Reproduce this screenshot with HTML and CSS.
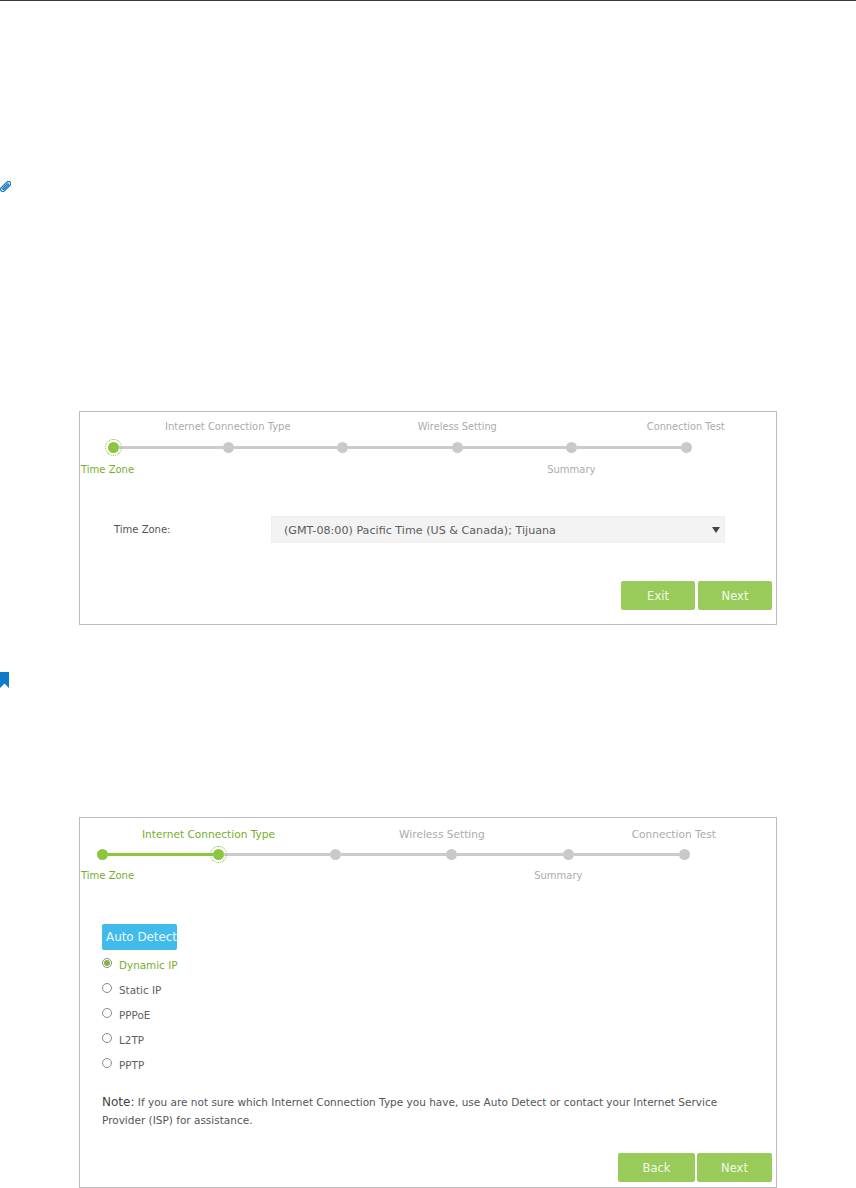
FILE: index.html
```html
<!DOCTYPE html>
<html lang="en">
<head>
<meta charset="utf-8">
<title>Quick Setup</title>
<link rel="stylesheet" href="styles.css">
</head>
<body>
<div class="page">
  <div class="tip-row clip-row">
    <svg class="clip" width="11" height="11" viewBox="0 0 11 11"><g transform="rotate(45 5.5 5.5)" fill="none" stroke="#1478c4" stroke-width="1.3"><rect x="3.4" y="-0.8" width="4.4" height="12.4" rx="2.2"/><rect x="4.9" y="1.6" width="1.5" height="7.6" rx="0.75"/></g></svg>
  </div>

  <section class="shot shot-a">
    <div class="labels la-top">
      <span class="lab l-a1">Internet Connection Type</span>
      <span class="lab l-a2">Wireless Setting</span>
      <span class="lab l-a3">Connection Test</span>
    </div>
    <div class="track ta">
      <span class="dot current"></span><span class="line"></span>
      <span class="dot"></span><span class="line"></span>
      <span class="dot"></span><span class="line"></span>
      <span class="dot"></span><span class="line"></span>
      <span class="dot"></span><span class="line"></span>
      <span class="dot"></span>
    </div>
    <div class="labels la-bot">
      <span class="lab on">Time Zone</span>
      <span class="lab l-a4">Summary</span>
    </div>
    <div class="field">
      <span class="field-name">Time Zone:</span>
      <div class="select">
        <span>(GMT-08:00) Pacific Time (US &amp; Canada); Tijuana</span>
        <span class="caret"></span>
      </div>
    </div>
    <div class="actions actions-a">
      <button class="btn">Exit</button>
      <button class="btn">Next</button>
    </div>
  </section>

  <div class="tip-row mark-row">
    <svg width="10" height="16" viewBox="0 0 10 16"><path d="M0 0H9V16L4.5 11.5 0 16Z" fill="#0b7cc9"/></svg>
  </div>

  <section class="shot shot-b">
    <div class="labels lb-top">
      <span class="lab on l-b1">Internet Connection Type</span>
      <span class="lab l-b2">Wireless Setting</span>
      <span class="lab l-b3">Connection Test</span>
    </div>
    <div class="track tb">
      <span class="dot done"></span><span class="line done"></span>
      <span class="dot current"></span><span class="line"></span>
      <span class="dot"></span><span class="line"></span>
      <span class="dot"></span><span class="line"></span>
      <span class="dot"></span><span class="line"></span>
      <span class="dot"></span>
    </div>
    <div class="labels lb-bot">
      <span class="lab on">Time Zone</span>
      <span class="lab l-b4">Summary</span>
    </div>
    <div class="detect-box"><button class="detect">Auto Detect</button></div>
    <ul class="radios">
      <li class="radio on"><span class="ring checked"></span>Dynamic IP</li>
      <li class="radio"><span class="ring"></span>Static IP</li>
      <li class="radio"><span class="ring"></span>PPPoE</li>
      <li class="radio"><span class="ring"></span>L2TP</li>
      <li class="radio"><span class="ring"></span>PPTP</li>
    </ul>
    <p class="note"><span class="note-head">Note:</span> If you are not sure which Internet Connection Type you have, use Auto Detect or contact your Internet Service<br>Provider (ISP) for assistance.</p>
    <div class="actions actions-b">
      <button class="btn wide">Back</button>
      <button class="btn wider">Next</button>
    </div>
  </section>
</div>
</body>
</html>
```
FILE: styles.css
```css
* { box-sizing: border-box; }
html, body { margin: 0; padding: 0; background: #fff; }
body {
  height: 1188px;
  overflow: hidden;
  font-family: "DejaVu Sans", Verdana, sans-serif;
  font-size: 10px;
  color: #555;
}
.page { border-top: 1px solid #3a3a3a; }

.tip-row { display: flex; line-height: 0; }
.clip-row { padding-top: 180px; height: 410px; }
.mark-row { padding-top: 47px; height: 192px; }

.shot {
  width: 698px;
  margin-left: 79px;
  border: 1px solid #bcbcbc;
  background: #fff;
}
.shot-a { height: 214px; }
.shot-b { height: 371px; }

.labels { display: flex; height: 14px; line-height: 14px; white-space: nowrap; }
.lab { color: #ababab; }
.lab.on { color: #78ad2c; }

.la-top { margin-top: 8px; }
.l-a1 { margin-left: 85px; }
.l-a2 { margin-left: 127px; font-size: 9.8px; }
.l-a3 { margin-left: 150px; font-size: 9.8px; }
.la-bot { margin-top: 9px; margin-left: 1px; }
.l-a4 { margin-left: 413px; }

.lb-top { margin-top: 9px; font-size: 10.6px; }
.l-b1 { margin-left: 62px; }
.l-b2 { margin-left: 124px; }
.l-b3 { margin-left: 147px; }
.lb-bot { margin-top: 8px; margin-left: 1px; }
.l-b4 { margin-left: 400px; }

.track { display: flex; align-items: center; height: 14px; }
.ta { margin-top: 6px; padding-left: 28px; width: 612px; }
.tb { margin-top: 6px; padding-left: 17px; width: 610px; }
.dot {
  flex: none;
  width: 11px;
  height: 11px;
  border-radius: 50%;
  background: #c9c9c9;
}
.dot.done { background: #8cc63f; }
.dot.current {
  width: 17px;
  height: 17px;
  margin: -3px;
  position: relative;
  background: #8cc63f;
  border: 1px dotted #7fb83a;
  background-clip: content-box;
  padding: 2px;
}
.line { flex: 1; height: 3px; background: #cbcbcb; }
.line.done { background: #8cc63f; }

.field { display: flex; align-items: center; margin-top: 39px; padding-left: 34px; }
.field-name { width: 157px; }
.select {
  display: flex;
  align-items: center;
  justify-content: space-between;
  width: 454px;
  height: 27px;
  padding: 1px 4px 0 12px;
  background: #f3f3f3;
  border: 1px solid #efefef;
  color: #5c5c5c;
  font-size: 11.15px;
}
.caret {
  width: 0;
  height: 0;
  border-left: 4px solid transparent;
  border-right: 4px solid transparent;
  border-top: 6px solid #444;
}

.actions { display: flex; justify-content: flex-end; padding-right: 4px; }
.actions-a { gap: 3px; margin-top: 38px; }
.actions-b { gap: 2px; margin-top: 24px; }
.btn {
  width: 74px;
  height: 29px;
  padding: 0;
  border: 0;
  border-radius: 2px;
  background: #98cb59;
  color: #f4f9ec;
  font-family: inherit;
  font-size: 11.5px;
}
.btn.wide { width: 77px; }
.btn.wider { width: 75px; }

.detect-box { margin-top: 41px; padding-left: 22px; }
.detect {
  display: block;
  width: 75px;
  height: 26px;
  padding: 0 0 0 4px;
  border: 0;
  border-radius: 2px;
  background: #41bbec;
  color: #eefaff;
  font-family: inherit;
  font-size: 11.9px;
  text-align: left;
  white-space: nowrap;
}

.radios { list-style: none; margin: 2px 0 0; padding: 0 0 0 22px; }
.radio {
  display: flex;
  align-items: center;
  gap: 7px;
  height: 25px;
  font-size: 10.4px;
  color: #606060;
}
.radio.on { color: #78ad2c; }
.ring {
  flex: none;
  width: 10px;
  height: 10px;
  margin-top: -3px;
  border: 1px solid #8a8a8a;
  border-radius: 50%;
  background: #fff;
}
.ring.checked {
  padding: 1px;
  background: #82b53e;
  background-clip: content-box;
}

.note {
  margin: 16px 0 0;
  padding-left: 22px;
  font-size: 10.5px;
  line-height: 18px;
  white-space: nowrap;
  color: #555;
}
.note-head { font-size: 12px; color: #444; }
```
